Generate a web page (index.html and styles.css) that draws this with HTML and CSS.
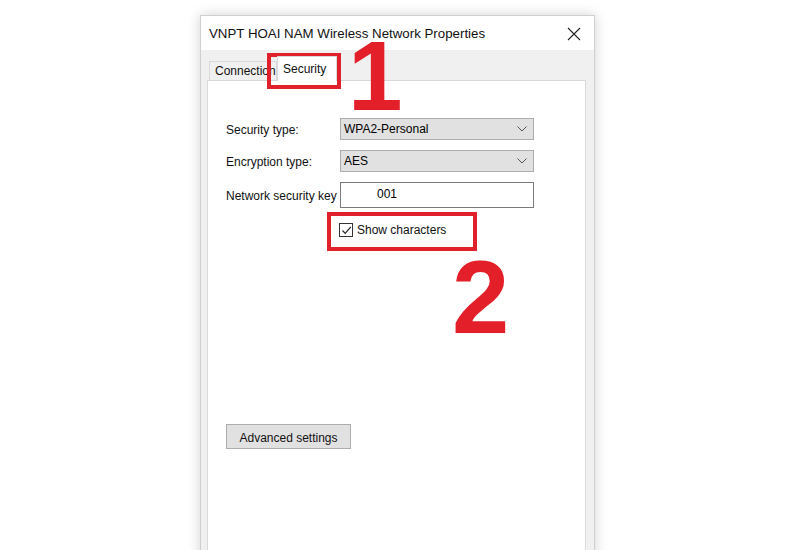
FILE: index.html
```html
<!DOCTYPE html>
<html lang="en">
<head>
    <meta charset="UTF-8">
    <meta name="viewport" content="width=device-width, initial-scale=1.0">
    <title>Wireless Network Properties</title>
    <link rel="stylesheet" href="styles.css">
</head>
<body>
    <div class="dialog">
        <div class="titlebar">
            <span class="title">VNPT HOAI NAM Wireless Network Properties</span>
            <svg class="close" width="14" height="14" viewBox="0 0 14 14">
                <path d="M1 1 L13 13 M13 1 L1 13" stroke="#222" stroke-width="1.1" fill="none"/>
            </svg>
        </div>

        <div class="tabs">
            <div class="tab">Connection</div>
            <div class="tab active">Security</div>
        </div>

        <div class="panel">
            <div class="form">
                <label>Security type:</label>
                <div class="select">
                    <span>WPA2-Personal</span>
                    <svg width="10" height="6" viewBox="0 0 10 6"><path d="M0.5 0.5 L5 5 L9.5 0.5" stroke="#555" fill="none"/></svg>
                </div>

                <label>Encryption type:</label>
                <div class="select">
                    <span>AES</span>
                    <svg width="10" height="6" viewBox="0 0 10 6"><path d="M0.5 0.5 L5 5 L9.5 0.5" stroke="#555" fill="none"/></svg>
                </div>

                <label>Network security key</label>
                <div class="textbox">001</div>
            </div>

            <div class="check-row">
                <span class="checkbox">
                    <svg width="11" height="11" viewBox="0 0 11 11"><path d="M1.5 5.5 L4.2 8.3 L9.8 1.8" stroke="#222" stroke-width="1.2" fill="none"/></svg>
                </span>
                <span>Show characters</span>
            </div>

            <button class="advanced">Advanced settings</button>
        </div>
    </div>

    <!-- annotations drawn over the screenshot -->
    <div class="mark mark-tab"></div>
    <div class="mark mark-check"></div>
    <div class="num num-1">1</div>
    <div class="num num-2">2</div>
</body>
</html>
```

FILE: styles.css
```css
body {
    margin: 0;
    background-color: #fff;
    font-family: "Liberation Sans", Arial, sans-serif;
    font-size: 12px;
    color: #000;
    height: 550px;
    overflow: hidden;
    position: relative;
}
.dialog {
    margin: 15px 0 0 200px;
    width: 393px;
    height: 560px;
    background-color: #f0f0f0;
    border: 1px solid #cfcfcf;
    border-bottom: none;
    box-shadow: 0 0 12px rgba(0, 0, 0, 0.18);
    display: flex;
    flex-direction: column;
}
.titlebar {
    height: 35px;
    background-color: #fff;
    display: flex;
    align-items: center;
    justify-content: space-between;
    padding: 0 13px 0 8px;
}
.title {
    font-family: "Liberation Sans", Arial, sans-serif;
    font-size: 13.3px;
    color: #111;
    padding-top: 1px;
}
.close {
    margin-top: 1px;
}
.tabs {
    display: flex;
    align-items: flex-end;
    height: 30px;
    padding-left: 8px;
}
.tab {
    height: 18px;
    line-height: 19px;
    padding: 0 5px;
    border: 1px solid #d9d9d9;
    border-bottom: none;
    background-color: #f0f0f0;
    color: #111;
    width: 56px;
    overflow: hidden;
    white-space: nowrap;
}
.tab.active {
    height: 24px;
    line-height: 25px;
    width: 47px;
    margin-left: 0;
    margin-bottom: -1px;
    background-color: #fff;
    position: relative;
    z-index: 1;
    padding: 0 6px 0 5px;
}
.panel {
    margin: 0 8px 0 6px;
    height: 464px;
    background-color: #fff;
    border: 1px solid #d9d9d9;
    padding: 37px 0 0 18px;
}
.form {
    display: grid;
    grid-template-columns: 114px 194px;
    row-gap: 10px;
    align-items: center;
}
.form label {
    color: #111;
    padding-top: 2px;
}
.select {
    height: 20px;
    background-color: #e1e1e1;
    border: 1px solid #adadad;
    display: flex;
    align-items: center;
    justify-content: space-between;
    padding: 0 6px 0 3px;
}
.textbox {
    height: 24px;
    line-height: 22px;
    border: 1px solid #7a7a7a;
    background-color: #fff;
    padding-left: 36px;
}
.check-row {
    display: flex;
    align-items: center;
    gap: 4px;
    margin: 15px 0 0 113px;
    color: #111;
}
.checkbox {
    width: 12px;
    height: 12px;
    border: 1px solid #333;
    display: flex;
    align-items: center;
    justify-content: center;
    background-color: #fff;
}
.advanced {
    display: block;
    margin-top: 187px;
    width: 125px;
    height: 25px;
    background-color: #e1e1e1;
    border: 1px solid #adadad;
    font-family: "Liberation Sans", Arial, sans-serif;
    font-size: 12px;
    color: #111;
    padding: 2px 0 0;
}
.mark {
    position: absolute;
    border: 4px solid #e0202b;
}
.mark-tab {
    left: 267px;
    top: 53px;
    width: 66px;
    height: 28px;
}
.mark-check {
    left: 327px;
    top: 212px;
    width: 142px;
    height: 31px;
}
.num {
    position: absolute;
    font-family: "Liberation Sans", Arial, sans-serif;
    font-weight: bold;
    color: #e3202a;
    line-height: 0.75;
}
.num-1 {
    left: 348px;
    top: 40px;
    font-size: 98px;
}
.num-2 {
    left: 452px;
    top: 259px;
    font-size: 103px;
}
```
